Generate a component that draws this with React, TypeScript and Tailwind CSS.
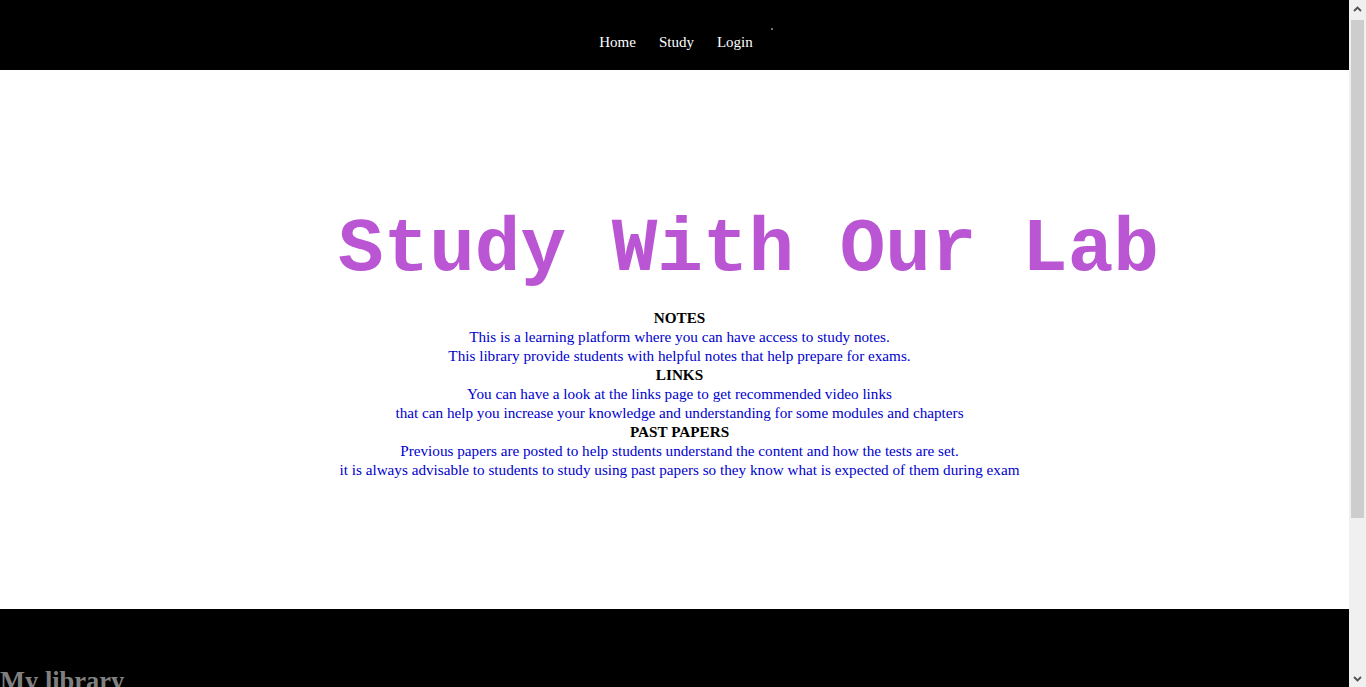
import React from "react";

function Scrollbar() {
  return (
    <div className="w-[17px] h-full bg-[#f0f0f0] flex flex-col items-center shrink-0">
      <div className="h-[17px] w-full flex items-center justify-center">
        <svg width="9" height="6" viewBox="0 0 9 6">
          <polyline points="1,5 4.5,1.5 8,5" fill="none" stroke="#505050" strokeWidth="1.8" />
        </svg>
      </div>
      <div className="mt-[3px] w-[13px] h-[498px] bg-[#cdcdcd]" />
      <div className="flex-1" />
      <div className="h-[17px] w-full flex items-center justify-center">
        <svg width="9" height="6" viewBox="0 0 9 6">
          <polyline points="1,1 4.5,4.5 8,1" fill="none" stroke="#505050" strokeWidth="1.8" />
        </svg>
      </div>
    </div>
  );
}

export default function App() {
  return (
    <div className="h-[687px] flex overflow-hidden bg-white font-['Liberation_Serif',serif]">
      <div className="flex-1 overflow-hidden">
        <div className="min-h-[900px] bg-white">
          <nav className="h-[70px] bg-black flex justify-center items-start pt-[33px] relative">
            <div className="flex gap-[23px] text-[15px] leading-[18px] text-white pl-[3px]">
              <a className="cursor-pointer">Home</a>
              <a className="cursor-pointer">Study</a>
              <a className="cursor-pointer">Login</a>
            </div>
            <span className="absolute left-[771px] top-[28px] w-[2px] h-[2px] bg-[#777]" />
          </nav>
          <main className="pt-[142px] pb-[130px]">
            <h1 className="font-['Liberation_Mono','Courier_New',monospace] font-bold text-[76px] leading-none text-[#ba55d3] pl-[338px] whitespace-nowrap">
              Study With Our Lab
            </h1>
            <div className="mt-[20px] text-center text-[15.2px] leading-[19px] pl-[10px]">
              <div className="font-bold text-black">NOTES</div>
              <div className="text-[#0000cd]">This is a learning platform where you can have access to study notes.</div>
              <div className="text-[#0000cd]">This library provide students with helpful notes that help prepare for exams.</div>
              <div className="font-bold text-black">LINKS</div>
              <div className="text-[#0000cd]">You can have a look at the links page to get recommended video links</div>
              <div className="text-[#0000cd]">that can help you increase your knowledge and understanding for some modules and chapters</div>
              <div className="font-bold text-black">PAST PAPERS</div>
              <div className="text-[#0000cd]">Previous papers are posted to help students understand the content and how the tests are set.</div>
              <div className="text-[#0000cd]">it is always advisable to students to study using past papers so they know what is expected of them during exam</div>
            </div>
          </main>
          <footer className="bg-black pt-[57px] pb-[200px]">
            <h2 className="font-bold text-[26.5px] text-[#808080] leading-[30px]">My library</h2>
          </footer>
        </div>
      </div>
      <Scrollbar />
    </div>
  );
}
